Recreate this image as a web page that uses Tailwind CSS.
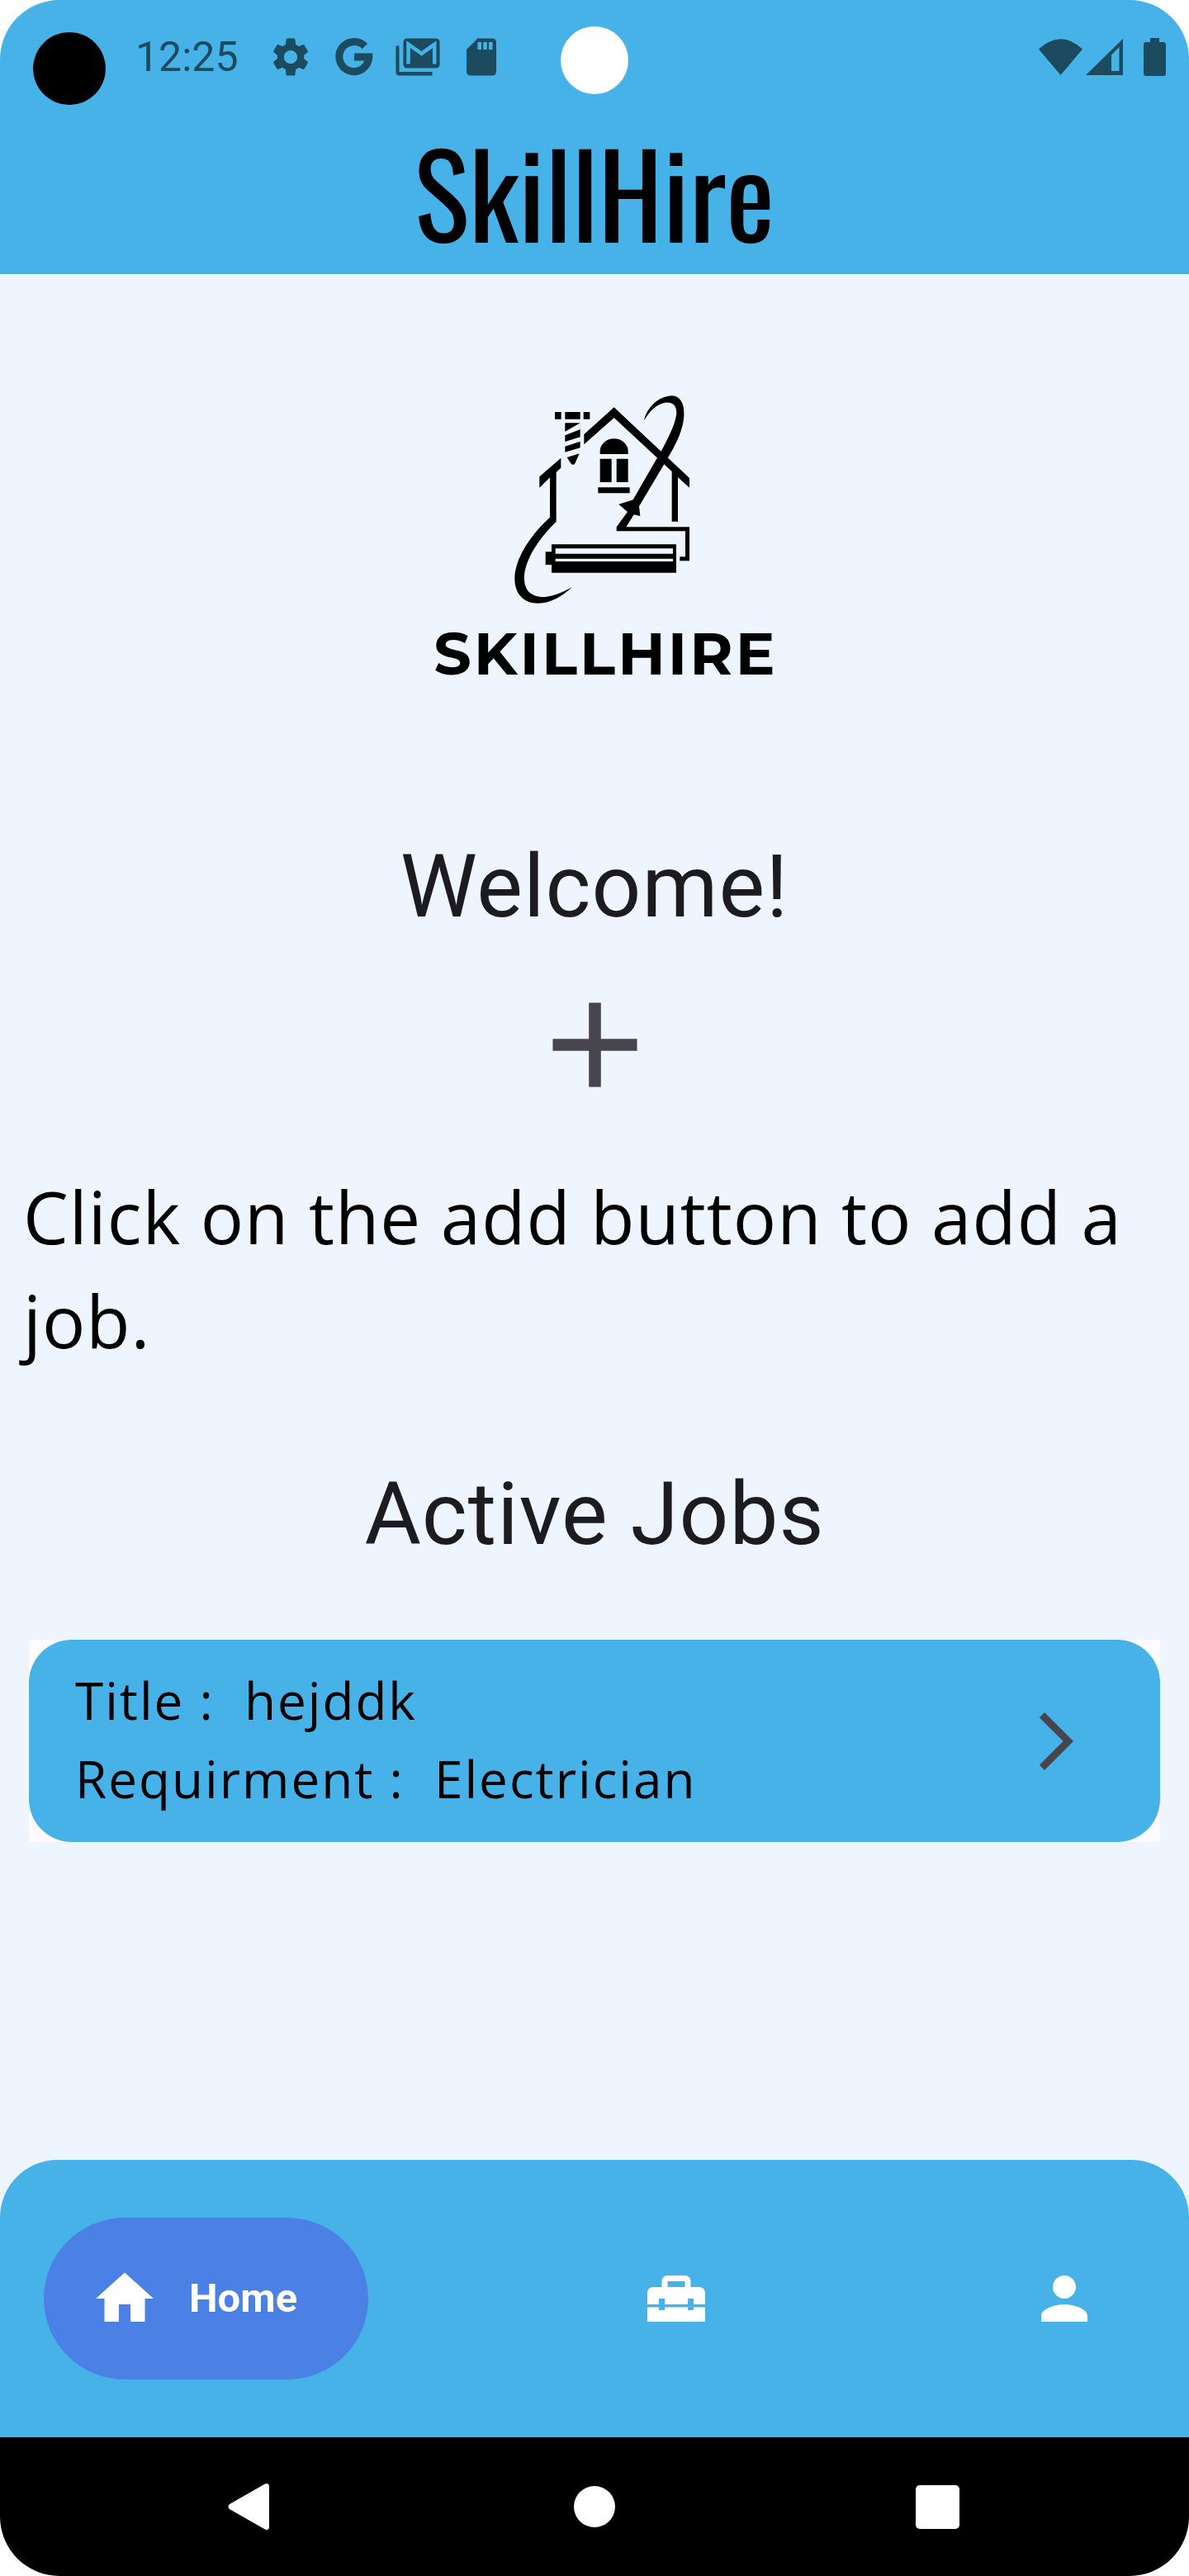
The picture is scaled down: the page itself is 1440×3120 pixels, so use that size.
<!DOCTYPE html>
<html lang="en">
<head>
<meta charset="utf-8">
<meta name="viewport" content="width=device-width, initial-scale=1">
<title>SkillHire</title>
<script src="https://cdn.jsdelivr.net/npm/@tailwindcss/browser@4"></script>
</head>
<body class="bg-white">
<div class="relative flex min-h-screen flex-col overflow-hidden rounded-[72px] bg-[#eef5ff]">

  <header class="bg-[#47b2e7]">
    <!-- Status bar -->
    <div class="flex h-[137px] items-center justify-between pr-7 pl-41 text-[#1c4a5e]">
      <div class="flex items-center">
        <time class="font-[Roboto,sans-serif] text-[50px] leading-[54px]">12:25</time>
        <div class="ml-9 flex items-center gap-[23px]">
          <svg class="size-[54px]" viewBox="0 0 24 24" fill="currentColor" aria-label="Settings"><path d="M19.140 12.940c.04-.3.06-.61.06-.94 0-.32-.02-.64-.07-.94l2.030-1.580c.18-.14.23-.41.12-.61l-1.920-3.320c-.12-.22-.37-.29-.59-.22l-2.390.96c-.5-.38-1.030-.7-1.620-.94L14.400 2.500c-.04-.3-.24-.5-.48-.5h-3.840c-.24 0-.43.2-.47.5l-.36 2.850c-.59.24-1.130.57-1.620.94l-2.390-.96c-.22-.08-.47 0-.59.22L2.740 8.870c-.12.21-.08.47.12.61l2.030 1.580c-.05.3-.09.63-.09.94s.02.64.07.94l-2.030 1.580c-.18.14-.23.41-.12.61l1.920 3.320c.12.22.37.29.59.22l2.390-.96c.5.38 1.030.7 1.620.94l.36 2.850c.05.3.24.5.48.5h3.840c.24 0 .44-.2.47-.5l.36-2.850c.59-.24 1.130-.56 1.620-.94l2.390.96c.22.08.47 0 .59-.22l1.920-3.320c.12-.22.07-.47-.12-.61l-2.010-1.580zM12 15.600c-1.980 0-3.600-1.620-3.600-3.600s1.620-3.600 3.600-3.600 3.600 1.620 3.600 3.600-1.620 3.600-3.600 3.600z"/></svg>
          <svg class="size-[54px]" viewBox="0 0 24 24" fill="none" stroke="currentColor" stroke-width="4" aria-label="Google"><path d="M17.700 6.300A8 8 0 1 0 19.900 12H12"/></svg>
          <svg class="size-[54px]" viewBox="0 0 24 24" fill="none" aria-label="Mail">
            <rect x="4.200" y="2" width="19.600" height="16" rx="2" fill="currentColor"/>
            <path d="M6.900 15.800V5.200L14 10.200 21 5.200V15.800" stroke="#47b2e7" stroke-width="2"/>
            <path d="M.2 6H2V20H19.800V22H2.200Q.2 22 .2 20Z" fill="currentColor"/>
          </svg>
          <svg class="size-[54px]" viewBox="0 0 24 24" fill="currentColor" aria-label="SD card"><path d="M18 2h-8L4.020 8 4 20c0 1.100.9 2 2 2h12c1.100 0 2-.9 2-2V4c0-1.100-.9-2-2-2zm-6 6h-2V4h2v4zm3 0h-2V4h2v4zm3 0h-2V4h2v4z"/></svg>
        </div>
      </div>
      <div class="flex items-center">
        <svg class="h-11 w-[53px]" viewBox="0 0 53 44" fill="currentColor" aria-label="Wi-Fi"><path d="M0 12.500Q26.500-12 53 12.500L26.500 44Z"/></svg>
        <svg class="ml-1 h-11 w-[45px]" viewBox="0 0 45 44" fill="currentColor" fill-rule="evenodd" aria-label="Signal"><path d="M0 44L45 0V44ZM31 39H40.500V10L31 19.500Z"/></svg>
        <svg class="ml-[25px] h-[46px] w-[27px]" viewBox="0 0 27 46" fill="currentColor" aria-label="Battery"><path d="M8 0H19V5H24Q27 5 27 8V43Q27 46 24 46H3Q0 46 0 43V8Q0 5 3 5H8Z"/></svg>
      </div>
    </div>
    <!-- Floating dot and camera cut-out over the bar -->
    <div class="absolute top-[39px] left-10 size-22 rounded-full bg-black"></div>
    <div class="absolute top-8 left-1/2 size-[82px] -translate-x-1/2 rounded-full bg-white"></div>
    <h1 class="h-[195px] text-center font-[Oswald,'Liberation_Sans_Narrow',sans-serif] text-[140px] leading-[188px] text-black">SkillHire</h1>
  </header>

  <main class="flex flex-1 flex-col font-['Open_Sans','Noto_Sans',sans-serif] text-black">
    <svg class="mx-auto mt-[118px] h-[400px] w-[460px]" viewBox="-30 0 1380 1200" role="img" aria-label="SkillHire logo">
      <!-- roof and walls -->
      <path d="M731 130L1005 387V422L963 384V545H941V363L731 168L622 265V228Z"/>
      <path d="M460 382L538 314V350L521 366V545L498 530V385L460 422Z"/>
      <!-- window -->
      <path d="M680 300V290A51 46 0 0 1 782 290V300ZM680 317H722V402H680ZM740 317H782V402H740ZM673 421H788V442H673Z"/>
      <!-- screw -->
      <path d="M516 147H539V173H516ZM553 147H608V173H553ZM620 147H643V173H620ZM553 187H608L553 218ZM553 232L608 210V238L553 255ZM553 272L608 254V277L553 293ZM560 312L605 298L590 332Q582 345 573 332Z"/>
      <!-- cable -->
      <path d="M500 528C430 590 370 680 370 752C370 810 405 842 455 842C500 842 545 815 580 782C540 805 500 820 465 819C420 815 403 785 405 745C408 680 460 605 521 545Z"/>
      <!-- brush and roller handle -->
      <path d="M840 178C850 130 895 88 942 88C985 90 992 145 980 195C968 245 940 290 920 325L822 490L826 525L803 520L775 565H1005V688H970V673H990V580H740V565L780 510L748 482L800 466L890 310C925 250 955 190 958 150C958 115 935 110 915 113C880 122 860 145 840 178Z"/>
      <!-- roller -->
      <path fill-rule="evenodd" d="M504 628H957V731H504V702H482V655H504ZM518 643V662H945V643ZM518 680V690H945V680Z"/>
      <text x="76" y="1100" font-family="Montserrat, Inter, sans-serif" font-weight="700" font-size="214" letter-spacing="9">SKILLHIRE</text>
    </svg>

    <h2 class="mt-[155px] text-center font-[Roboto,sans-serif] text-[105px] leading-[140px] tracking-[1px] text-[#1c1b1f]">Welcome!</h2>
    <button type="button" aria-label="Add a job" class="mx-auto mt-[33px] size-[175px] text-[#49454f]">
      <svg class="size-full" viewBox="0 0 24 24" fill="currentColor"><path d="M19 13h-6v6h-2v-6H5v-2h6V5h2v6h6v2z"/></svg>
    </button>
    <p class="mt-[57px] px-7 text-[87px] leading-[126px] tracking-[1px]">Click on the add button to add a job.</p>

    <h2 class="mt-[103px] text-center font-[Roboto,sans-serif] text-[105px] leading-[140px] tracking-[1px] text-[#1c1b1f]">Active Jobs</h2>
    <div class="mx-[35px] mt-[81px] mb-20 bg-[#fffbff]">
      <a href="#job" class="flex h-[245px] items-center justify-between rounded-[52px] bg-[#47b2e7] pr-21 pl-14">
        <div class="pb-1 text-[62px] leading-[95px] tracking-[2px]">
          <p>Title :&nbsp; hejddk</p>
          <p>Requirment :&nbsp; Electrician</p>
        </div>
        <svg class="size-21 text-[#49454f]" viewBox="0 0 24 24" fill="currentColor" aria-hidden="true"><path d="M6.230 20.230L8 22 18 12 8 2 6.230 3.770 14.460 12z"/></svg>
      </a>
    </div>
  </main>

  <nav class="flex h-[336px] items-center justify-between rounded-t-[70px] bg-[#47b2e7] px-[53px] text-white">
    <a href="#home" class="flex h-49 items-center gap-9 rounded-full bg-[#4b80e4] pr-[86px] pl-14 font-[Roboto,sans-serif] text-[49px] font-bold">
      <svg class="size-21" viewBox="0 0 24 24" fill="currentColor" aria-hidden="true"><path d="M10 20v-6h4v6h5v-8h3L12 3 2 12h3v8z"/></svg>
      Home
    </a>
    <a href="#jobs" aria-label="Jobs" class="flex h-49 items-center rounded-full px-14">
      <svg class="size-21" viewBox="0 0 24 24" fill="currentColor"><path d="M18 16h-2v-1H8v1H6v-1H2v5h20v-5h-4v1zM20 8h-3V6c0-1.100-.9-2-2-2H9c-1.100 0-2 .9-2 2v2H4c-1.100 0-2 .9-2 2v4h4v-2h2v2h8v-2h2v2h4v-4c0-1.100-.9-2-2-2zm-5 0H9V6h6v2z"/></svg>
    </a>
    <a href="#profile" aria-label="Profile" class="flex h-49 items-center rounded-full px-14">
      <svg class="size-21" viewBox="0 0 24 24" fill="currentColor"><path d="M12 12c2.210 0 4-1.790 4-4s-1.790-4-4-4-4 1.790-4 4 1.790 4 4 4zm0 2c-2.670 0-8 1.340-8 4v2h16v-2c0-2.660-5.330-4-8-4z"/></svg>
    </a>
  </nav>

  <!-- System navigation -->
  <div class="flex h-42 items-center justify-center gap-[332px] bg-black text-white">
    <button type="button" aria-label="Back" class="size-21"><svg class="size-full" viewBox="0 0 84 84" fill="currentColor"><path d="M58 15Q63 12 64 17V67Q63 72 58 69L16 45Q13 42 16 39Z"/></svg></button>
    <button type="button" aria-label="Home screen" class="size-21"><svg class="size-full" viewBox="0 0 84 84" fill="currentColor"><circle cx="42" cy="42" r="25"/></svg></button>
    <button type="button" aria-label="Recent apps" class="size-21"><svg class="size-full" viewBox="0 0 84 84" fill="currentColor"><rect x="15" y="16" width="53" height="53" rx="5"/></svg></button>
  </div>
</div>
</body>
</html>
